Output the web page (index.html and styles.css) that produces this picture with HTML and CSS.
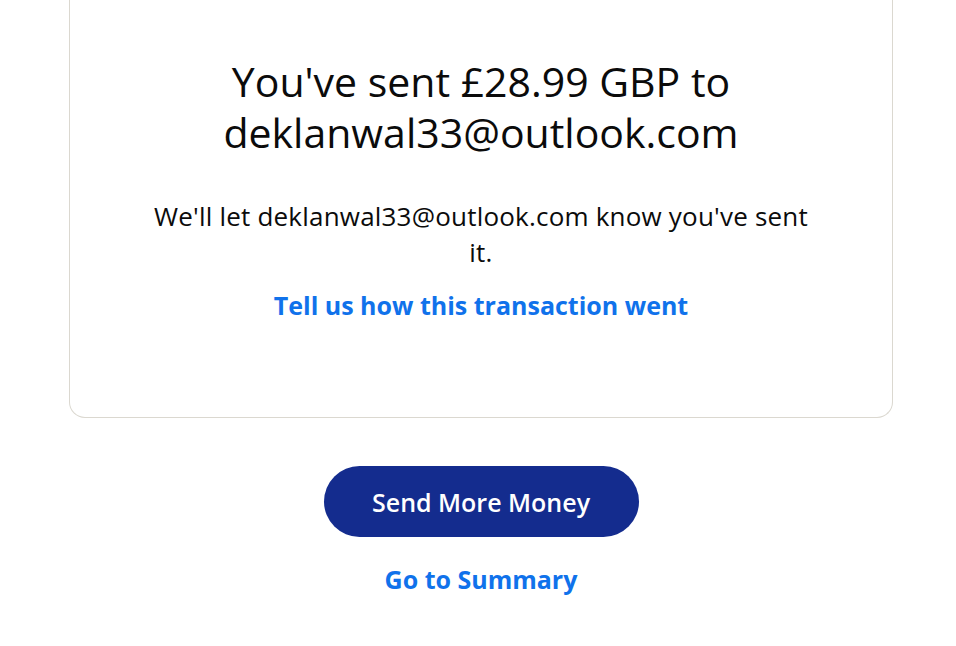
FILE: index.html
```html
<!DOCTYPE html>
<html lang="en">
<head>
<meta charset="utf-8">
<title>Payment sent</title>
<link rel="stylesheet" href="styles.css">
</head>
<body>
<main class="page">
  <section class="card">
    <h1 class="title">You've sent £28.99 GBP to deklanwal33@outlook.com</h1>
    <p class="note">We'll let deklanwal33@outlook.com know you've sent it.</p>
    <a class="feedback" href="#">Tell us how this transaction went</a>
  </section>
  <div class="actions">
    <a class="btn-primary" href="#">Send More Money</a>
    <a class="link-secondary" href="#">Go to Summary</a>
  </div>
</main>
</body>
</html>
```
FILE: styles.css
```css
* { box-sizing: border-box; }
html, body { margin: 0; padding: 0; background: #ffffff; }
body {
  font-family: "Open Sans", "Liberation Sans", sans-serif;
  color: #000000;
}
.page {
  width: 824px;
  margin-left: 69px;
  display: flex;
  flex-direction: column;
  align-items: center;
}
.card {
  width: 100%;
  border: 1px solid #dbd8d0;
  border-top: none;
  border-radius: 0 0 16px 16px;
  padding: 56px 60px 94px;
  display: flex;
  flex-direction: column;
  align-items: center;
  text-align: center;
}
.title {
  margin: 0;
  font-size: 41px;
  line-height: 51px;
  font-weight: 400;
  color: #0b0b0b;
  max-width: 560px;
}
.note {
  margin: 40px 0 0;
  font-size: 26px;
  line-height: 36px;
  letter-spacing: 0.2px;
  color: #0b0b0b;
  max-width: 670px;
}
.feedback {
  margin-top: 17px;
  font-size: 25px;
  line-height: 36px;
  font-weight: 700;
  color: #1072eb;
  text-decoration: none;
}
.actions {
  display: flex;
  flex-direction: column;
  align-items: center;
  margin-top: 48px;
}
.btn-primary {
  width: 315px;
  height: 71px;
  border-radius: 36px;
  background: #142c8e;
  color: #ffffff;
  font-size: 25px;
  font-weight: 600;
  display: flex;
  align-items: center;
  justify-content: center;
  text-decoration: none;
}
.link-secondary {
  margin-top: 24px;
  font-size: 25px;
  line-height: 36px;
  font-weight: 700;
  color: #1072eb;
  text-decoration: none;
}
```
